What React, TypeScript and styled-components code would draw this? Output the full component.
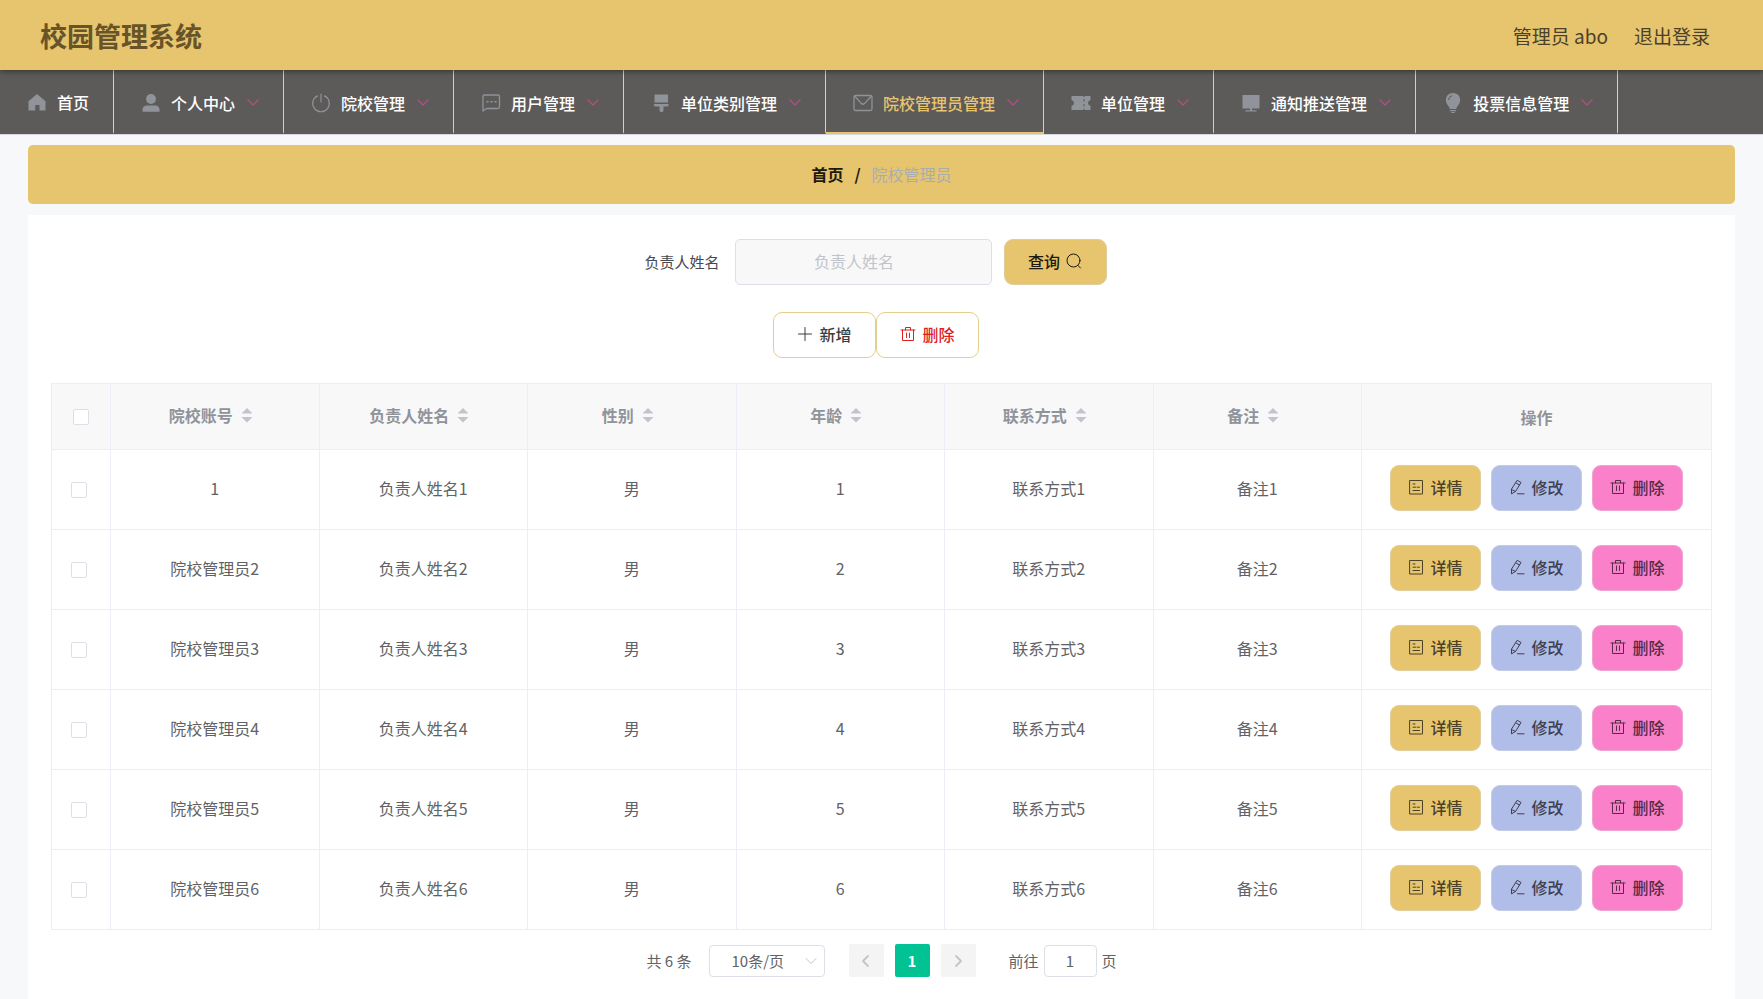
import React from "react";
import styled, { createGlobalStyle, css } from "styled-components";

const gold = "#e7c56f";
const line = "#ebeef5";

const GlobalStyle = createGlobalStyle`
  *, *::before, *::after { box-sizing: border-box; }
  body {
    margin: 0;
    background: #f6f8fa;
    color: #606266;
    font-family: "Noto Sans CJK SC", "Noto Sans", sans-serif;
    font-size: 16px;
    line-height: 24px;
  }
  button, input, select { font: inherit; color: inherit; margin: 0; }
  button { cursor: pointer; }
  a { color: inherit; text-decoration: none; }
`;

const Page = styled.div`
  min-height: 100vh;
  display: flex;
  flex-direction: column;
`;

const TopBar = styled.header`
  position: relative;
  z-index: 1;
  display: flex;
  align-items: center;
  justify-content: space-between;
  height: 70px;
  padding: 2px 53px 0 40px;
  background: ${gold};
  box-shadow: 0 1px 6px rgba(0, 0, 0, 0.5);
`;

const Title = styled.h1`
  margin: 0;
  font-size: 27px;
  line-height: 40px;
  font-weight: 700;
  color: #69542a;
`;

const Account = styled.div`
  display: flex;
  gap: 26px;
  font-size: 19px;
  line-height: 28px;
  color: #4a4128;
`;

const PlainButton = styled.button`
  padding: 0;
  border: 0;
  background: none;
`;

const Nav = styled.nav`
  display: flex;
  height: 65px;
  background: #5d5b59;
  border-bottom: 1px solid #d5d8dc;
`;

const NavItem = styled.a<{ $active?: boolean; $leaf?: boolean }>`
  display: flex;
  align-items: center;
  padding: ${(p) => (p.$leaf ? "2px 24px 0 23px" : "4px 23px 0")};
  border-right: 1px solid #d0d0d0;
  border-bottom: 2px solid ${(p) => (p.$active ? gold : "transparent")};
  color: ${(p) => (p.$active ? gold : "#fff")};
  font-weight: 500;
  white-space: nowrap;
`;

const NavIcon = styled.svg`
  width: 20px;
  height: 20px;
  margin: 0 10px 0 4px;
  color: #909399;
  flex: none;
`;

const NavArrow = styled.svg`
  width: 14px;
  height: 14px;
  margin-left: 11px;
  color: #b0507f;
`;

const Main = styled.main`
  flex: 1;
  display: flex;
  flex-direction: column;
  gap: 11px;
  padding: 10px 28px 0;
`;

const Crumbs = styled.nav`
  display: flex;
  align-items: center;
  justify-content: center;
  gap: 11px;
  height: 59px;
  padding-bottom: 2px;
  border-radius: 5px;
  background: ${gold};
  color: #a9adae;
`;

const CrumbHome = styled.a`
  color: #201a0c;
  font-weight: 700;
`;

const CrumbSlash = styled.span`
  color: #201a0c;
  font-weight: 700;
`;

const Panel = styled.section`
  flex: 1;
  padding: 24px 23px 20px;
  background: #fff;
`;

const SearchRow = styled.form`
  display: flex;
  align-items: center;
  justify-content: center;
  padding-right: 12px;
`;

const SearchLabel = styled.label`
  margin-right: 15px;
  font-size: 15px;
  color: #48494c;
`;

const SearchInput = styled.input`
  width: 257px;
  height: 46px;
  margin-right: 12px;
  padding: 0 34px 2px 16px;
  border: 1px solid #dcdfe6;
  border-radius: 5px;
  background: #f8f8f8;
  text-align: center;
  &::placeholder { color: #c0c4cc; opacity: 1; }
`;

type Tone = "gold" | "blue" | "pink" | "outline" | "danger";

const tones: Record<Tone, ReturnType<typeof css>> = {
  gold: css`background: ${gold}; border-color: #e0cd9b; color: #4d4227;`,
  blue: css`background: #b1bde9; border-color: #c2cbe8; color: #3c4050;`,
  pink: css`background: #f980c9; border-color: #f0a3d2; color: #542c45;`,
  outline: css`background: #fff; border-color: #e6cf8d; color: #3c3c3c;`,
  danger: css`background: #fff; border-color: #e6cf8d; color: #dc1f1f;`,
};

const Button = styled.button<{ $tone: Tone; $wide?: boolean }>`
  display: inline-flex;
  align-items: center;
  justify-content: center;
  gap: 6px;
  width: ${(p) => (p.$wide ? 103 : 91)}px;
  height: 46px;
  padding: 0 0 2px;
  border: 1px solid;
  border-radius: 9px;
  font-weight: 500;
  ${(p) => tones[p.$tone]}
`;

const SubmitButton = styled(Button)`
  color: #201a0c;
`;

const ButtonIcon = styled.svg`
  width: 16px;
  height: 16px;
  flex: none;
`;

const Toolbar = styled.div`
  display: flex;
  justify-content: center;
  padding: 27px 11px 25px 0;
`;

const Table = styled.table`
  width: 100%;
  table-layout: fixed;
  border-collapse: collapse;
  text-align: center;
`;

const CheckCol = styled.col`
  width: 59px;
`;

const ActionCol = styled.col`
  width: 350px;
`;

const HeadCell = styled.th`
  height: 66px;
  padding: 0;
  border: 1px solid ${line};
  background: #f8f8f9;
  color: #909399;
  font-weight: 700;
`;

const Cell = styled.td`
  height: 80px;
  padding: 0 0 3px;
  border: 1px solid ${line};
`;

const CheckCell = styled(Cell)`
  padding: 0 4px 0 0;
`;

const Checkbox = styled.input`
  appearance: none;
  display: block;
  width: 16px;
  height: 16px;
  margin: 0 auto;
  border: 1px solid #dcdfe6;
  border-radius: 2px;
  background: #fff;
  &:checked { background: ${gold}; }
`;

const SortButton = styled(PlainButton)`
  display: inline-flex;
  align-items: center;
  padding-bottom: 4px;
  color: inherit;
  font-weight: inherit;
`;

const SortIcon = styled.svg`
  width: 12px;
  height: 16px;
  margin: 0 8px;
  fill: #c0c4cc;
`;

const Actions = styled.div`
  display: flex;
  justify-content: center;
  gap: 10px;
`;

const Pager = styled.div`
  display: flex;
  align-items: center;
  justify-content: center;
  margin-top: 14px;
  font-size: 15px;
`;

const SelectBox = styled.div`
  display: grid;
  align-items: center;
  margin: 0 24px 0 17px;
`;

const PageSize = styled.select`
  grid-area: 1 / 1;
  appearance: none;
  width: 116px;
  height: 32px;
  padding: 0 0 0 22px;
  border: 1px solid #dcdfe6;
  border-radius: 4px;
  background: #fff;
`;

const SelectArrow = styled.svg`
  grid-area: 1 / 1;
  justify-self: end;
  width: 14px;
  height: 14px;
  margin-right: 7px;
  color: #c0c4cc;
  pointer-events: none;
`;

const PageButtons = styled.div`
  display: flex;
  gap: 11px;
  margin-right: 33px;
`;

const PageButton = styled.button<{ $current?: boolean }>`
  display: flex;
  align-items: center;
  justify-content: center;
  width: 35px;
  height: 33px;
  padding: 0;
  border: 0;
  border-radius: 2px;
  background: ${(p) => (p.$current ? "#00c292" : "#f4f4f5")};
  color: ${(p) => (p.$current ? "#fff" : "#c0c4cc")};
  font-weight: 700;
`;

const JumpLabel = styled.label`
  display: flex;
  align-items: center;
  gap: 5px;
`;

const JumpInput = styled.input`
  width: 53px;
  height: 32px;
  padding: 0;
  border: 1px solid #dcdfe6;
  border-radius: 4px;
  text-align: center;
`;

const stroke = {
  fill: "none",
  stroke: "currentColor",
  strokeLinecap: "round",
  strokeLinejoin: "round",
} as const;

const navIcons: Record<string, React.ReactNode> = {
  home: <path fill="currentColor" d="M10 2 18.5 9.3V18.5H12.5V13H8.2V18.5H1.5V9.3Z" />,
  user: (
    <g fill="currentColor">
      <circle cx="10" cy="6" r="5" />
      <path d="M1.5 18.8V17Q1.5 12.5 6 12.5H14Q18.5 12.5 18.5 17V18.8Z" />
    </g>
  ),
  power: (
    <g {...stroke} strokeWidth="1.2">
      <path d="M10 1V9" />
      <path d="M6.5 2.9A8.3 8.3 0 1 0 13.5 2.9" />
    </g>
  ),
  chat: (
    <g {...stroke} strokeWidth="1.3">
      <path d="M2 18V3.5Q2 2 3.5 2H17Q18.5 2 18.5 3.5V14Q18.5 15.5 17 15.5H5.5Z" />
      <path d="M6 8.8H7M10 8.8H11M14 8.8H15" strokeWidth="1.6" />
    </g>
  ),
  brush: (
    <path
      fill="currentColor"
      d="M3.5 1.5H17V9.5H3.5ZM3 11H17.5V12Q17.500 13.500 16 13.500H12.500V17.5Q12.5 19 10.5 19Q8.5 19 8.5 17.5V13.500H4.500Q3 13.500 3 12Z"
    />
  ),
  mail: (
    <g {...stroke} strokeWidth="1.3">
      <rect x="1" y="2.5" width="18" height="15" rx="1.5" />
      <path d="M2 3.5 8.5 10.6Q10 12 11.5 10.6L18 3.5" />
    </g>
  ),
  ticket: (
    <path
      fill="currentColor"
      d="M.5 3H12L13 4.2L14 3H19.5V7.2Q17 7.5 17 10T19.5 12.8V17H14L13 15.8L12 17H.5V12.8Q3 12.5 3 10T.5 7.2ZM12.500 6V8.5H13.500V6ZM12.500 11V13.5H13.500V11Z"
      fillRule="evenodd"
    />
  ),
  monitor: <path fill="currentColor" d="M1.5 2H18.5V15.500H1.5ZM9 15.500H11V17.200H15.5V18.5H4.5V17.200H9Z" />,
  bulb: (
    <>
      <path
        fill="currentColor"
        d="M10 0Q17 .3 17.2 7.2Q17.2 10 15 12.5Q13.5 14.2 13.2 16H6.8Q6.5 14.2 5 12.5Q2.8 10 2.8 7.2Q3 .3 10 0ZM7 17H13V18.2H7ZM8.3 19H11.7V20H8.3Z"
      />
      <path d="M5.5 7Q5.8 3.5 9 2.7" fill="none" stroke="#5d5b59" />
    </>
  ),
};

const buttonIcons: Record<string, React.ReactNode> = {
  search: (
    <>
      <circle cx="7.5" cy="7.5" r="6.5" />
      <path d="M12 12.500 14.5 15" />
    </>
  ),
  plus: <path d="M8 1.500V14.500M1.500 8H14.500" />,
  trash: <path d="M1 4H15M5.500 4V1.500H10.500V4M2.500 4V14.500H13.500V4M6.500 7V11.500M9.500 7V11.500" />,
  detail: <path d="M2 1.500H14.500V15H2ZM5 5H7M5 8.200H8M5 11.500H11.500M9.500 8.200H11.500" />,
  edit: <path d="M8.500 1.500 12 3.500 6.500 12.500 2.500 14.800V10.500ZM7 4 10.500 6M2.500 10.500 6.500 12.500M8.500 14.800H15" />,
};

const Icon = ({ name }: { name: string }) => (
  <ButtonIcon viewBox="0 0 16 16" aria-hidden="true" {...stroke}>
    {buttonIcons[name]}
  </ButtonIcon>
);

const menu = [
  { label: "首页", icon: "home", leaf: true },
  { label: "个人中心", icon: "user" },
  { label: "院校管理", icon: "power" },
  { label: "用户管理", icon: "chat" },
  { label: "单位类别管理", icon: "brush" },
  { label: "院校管理员管理", icon: "mail", active: true },
  { label: "单位管理", icon: "ticket" },
  { label: "通知推送管理", icon: "monitor" },
  { label: "投票信息管理", icon: "bulb" },
];

const columns = ["院校账号", "负责人姓名", "性别", "年龄", "联系方式", "备注"];

const rows = [1, 2, 3, 4, 5, 6].map((n) => [
  n === 1 ? "1" : `院校管理员${n}`,
  `负责人姓名${n}`,
  "男",
  `${n}`,
  `联系方式${n}`,
  `备注${n}`,
]);

export default function App() {
  return (
    <Page>
      <GlobalStyle />
      <TopBar>
        <Title>校园管理系统</Title>
        <Account>
          <span>管理员 abo</span>
          <PlainButton type="button">退出登录</PlainButton>
        </Account>
      </TopBar>
      <Nav aria-label="主菜单">
        {menu.map((m) => (
          <NavItem key={m.label} href="#" $active={m.active} $leaf={m.leaf}>
            <NavIcon viewBox="0 0 20 20" aria-hidden="true">
              {navIcons[m.icon]}
            </NavIcon>
            {m.label}
            {!m.leaf && (
              <NavArrow viewBox="0 0 14 14" aria-hidden="true" {...stroke} strokeWidth="1.4">
                <path d="M2 4 7 9 12 4" />
              </NavArrow>
            )}
          </NavItem>
        ))}
      </Nav>
      <Main>
        <Crumbs aria-label="面包屑">
          <CrumbHome href="#">首页</CrumbHome>
          <CrumbSlash>/</CrumbSlash>
          <span>院校管理员</span>
        </Crumbs>
        <Panel>
          <SearchRow onSubmit={(e) => e.preventDefault()}>
            <SearchLabel htmlFor="leader">负责人姓名</SearchLabel>
            <SearchInput id="leader" placeholder="负责人姓名" />
            <SubmitButton $tone="gold" $wide type="submit">
              查询
              <Icon name="search" />
            </SubmitButton>
          </SearchRow>
          <Toolbar>
            <Button $tone="outline" $wide type="button">
              <Icon name="plus" />
              新增
            </Button>
            <Button $tone="danger" $wide type="button">
              <Icon name="trash" />
              删除
            </Button>
          </Toolbar>
          <Table>
            <colgroup>
              <CheckCol />
              {columns.map((c) => (
                <col key={c} />
              ))}
              <ActionCol />
            </colgroup>
            <thead>
              <tr>
                <HeadCell>
                  <Checkbox type="checkbox" aria-label="全选" />
                </HeadCell>
                {columns.map((c) => (
                  <HeadCell key={c}>
                    <SortButton type="button">
                      {c}
                      <SortIcon viewBox="0 0 12 16" aria-hidden="true">
                        <path d="M6 1 11.5 6.5H.5ZM6 15.5 11.5 10H.5Z" />
                      </SortIcon>
                    </SortButton>
                  </HeadCell>
                ))}
                <HeadCell>操作</HeadCell>
              </tr>
            </thead>
            <tbody>
              {rows.map((r) => (
                <tr key={r[1]}>
                  <CheckCell>
                    <Checkbox type="checkbox" aria-label={r[0]} />
                  </CheckCell>
                  {r.map((value, i) => (
                    <Cell key={i}>{value}</Cell>
                  ))}
                  <Cell>
                    <Actions>
                      <Button $tone="gold" type="button">
                        <Icon name="detail" />
                        详情
                      </Button>
                      <Button $tone="blue" type="button">
                        <Icon name="edit" />
                        修改
                      </Button>
                      <Button $tone="pink" type="button">
                        <Icon name="trash" />
                        删除
                      </Button>
                    </Actions>
                  </Cell>
                </tr>
              ))}
            </tbody>
          </Table>
          <Pager>
            <span>共 6 条</span>
            <SelectBox>
              <PageSize aria-label="每页条数" defaultValue="10">
                <option value="10">10条/页</option>
                <option value="20">20条/页</option>
              </PageSize>
              <SelectArrow viewBox="0 0 14 14" aria-hidden="true" {...stroke}>
                <path d="M2 4.5 7 9.5 12 4.5" />
              </SelectArrow>
            </SelectBox>
            <PageButtons>
              <PageButton type="button" aria-label="上一页">
                <ButtonIcon viewBox="0 0 16 16" aria-hidden="true" {...stroke} strokeWidth="1.8">
                  <path d="M10 3 5 8 10 13" />
                </ButtonIcon>
              </PageButton>
              <PageButton type="button" $current>
                1
              </PageButton>
              <PageButton type="button" aria-label="下一页">
                <ButtonIcon viewBox="0 0 16 16" aria-hidden="true" {...stroke} strokeWidth="1.8">
                  <path d="M6 3 11 8 6 13" />
                </ButtonIcon>
              </PageButton>
            </PageButtons>
            <JumpLabel>
              前往
              <JumpInput defaultValue="1" />
              页
            </JumpLabel>
          </Pager>
        </Panel>
      </Main>
    </Page>
  );
}
